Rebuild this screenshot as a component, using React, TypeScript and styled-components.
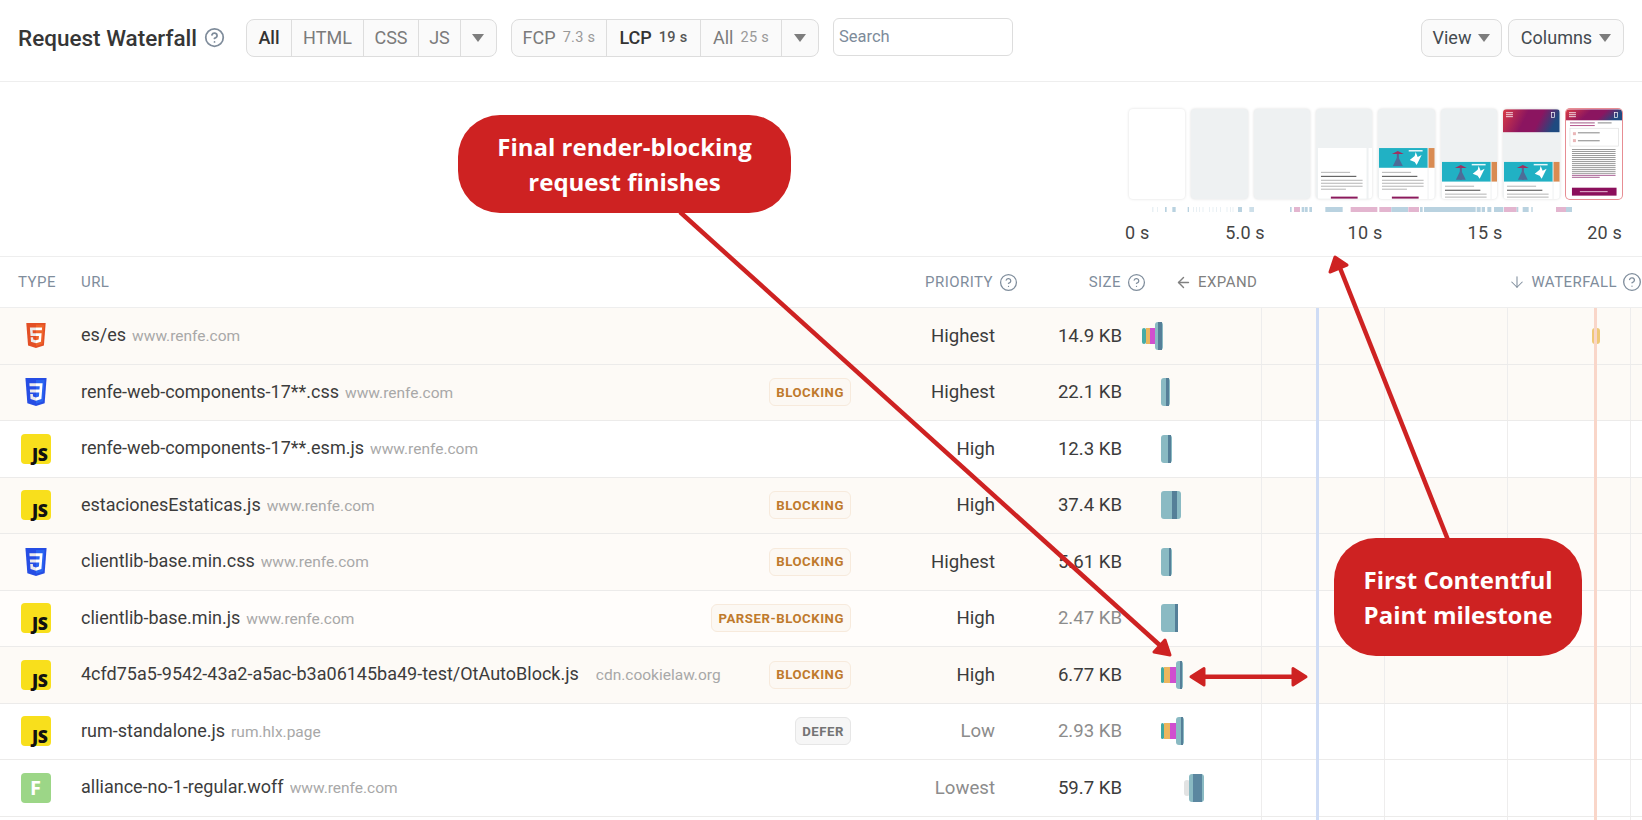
import React from "react";
import styled, { createGlobalStyle } from "styled-components";
import { ArrowDown, ArrowLeft, CircleHelp } from "lucide-react";

const Global = createGlobalStyle`
  html, body { margin: 0; padding: 0; background: #fff; overflow: hidden; }
  body { font-family: Roboto, "Liberation Sans", sans-serif; color: #3a3a3a; }
  * { box-sizing: border-box; }
`;

const Page = styled.div`
  position: relative;
  width: 1642px;
  height: 820px;
  overflow: hidden;
`;

/* Toolbar */
const Toolbar = styled.header`
  display: flex;
  align-items: center;
  height: 82px;
  padding: 0 18px 6px 18px;
  border-bottom: 1px solid #eeeeee;
`;
const Title = styled.h1`
  margin: 0;
  font-size: 22.5px;
  font-weight: 500;
  color: #363636;
  white-space: nowrap;
`;
const TitleHelp = styled.span`
  display: flex;
  margin: 0 21px 0 7px;
  color: #7f8c9b;
`;
const Group = styled.div`
  display: flex;
  height: 38px;
  margin-right: 14px;
  background: #fafafa;
  border: 1px solid #dddddd;
  border-radius: 8px;
`;
const Segment = styled.div<{ $active?: boolean; $width: number }>`
  display: flex;
  align-items: center;
  justify-content: center;
  gap: 7px;
  width: ${(p) => p.$width}px;
  font-size: 18px;
  font-weight: ${(p) => (p.$active ? 500 : 400)};
  color: ${(p) => (p.$active ? "#333333" : "#7b7b7b")};
  white-space: nowrap;
  & + & { border-left: 1px solid #dddddd; }
`;
const SegmentTime = styled.span<{ $active?: boolean }>`
  font-size: 14.5px;
  letter-spacing: 0.3px;
  font-weight: ${(p) => (p.$active ? 500 : 400)};
  color: ${(p) => (p.$active ? "#555555" : "#999999")};
`;
const Caret = styled.span`
  display: block;
  width: 0;
  height: 0;
  border-left: 6px solid transparent;
  border-right: 6px solid transparent;
  border-top: 8px solid #7d7d7d;
`;
const SearchBox = styled.input`
  width: 180px;
  height: 38px;
  padding: 0 5px;
  margin-bottom: 2px;
  font-family: Roboto, sans-serif;
  font-size: 16.5px;
  color: #333333;
  background: #fff;
  border: 1px solid #dddddd;
  border-radius: 6px;
  outline: none;
  &::placeholder { color: #7d8b9a; opacity: 1; }
`;
const Spacer = styled.div`
  flex: 1;
`;
const MenuButton = styled.div<{ $width: number }>`
  display: flex;
  align-items: center;
  justify-content: center;
  gap: 7px;
  width: ${(p) => p.$width}px;
  height: 38px;
  margin-left: 6px;
  font-size: 18px;
  color: #444a50;
  background: #fafafa;
  border: 1px solid #dddddd;
  border-radius: 8px;
`;

/* Filmstrip */
const Film = styled.section`
  display: flex;
  flex-direction: column;
  align-items: flex-end;
  height: 175px;
  padding: 27px 20px 0 0;
  border-bottom: 1px solid #eeeeee;
`;
const Frames = styled.div`
  display: flex;
  gap: 5.9px;
`;
const Frame = styled.div<{ $final?: boolean; $bg: string }>`
  width: 56.5px;
  height: 90px;
  overflow: hidden;
  border-radius: 4px;
  background: ${(p) => p.$bg};
  box-shadow: ${(p) =>
    p.$final ? "0 0 0 1px #e78d93" : "0 0 3px rgba(0, 0, 0, 0.14)"};
  svg { display: block; }
`;
const Ticks = styled.svg`
  display: block;
  margin: 8px -20px 0 0;
`;
const Axis = styled.div`
  display: flex;
  margin-top: 9px;
`;
const AxisLabel = styled.span<{ $width: number; $align: string }>`
  width: ${(p) => p.$width}px;
  font-size: 18px;
  line-height: 24px;
  letter-spacing: 0.2px;
  color: #444444;
  text-align: ${(p) => p.$align};
`;

/* Table */
const HeadRow = styled.div`
  display: flex;
  align-items: center;
  height: 51px;
  font-size: 15px;
  letter-spacing: 0.45px;
  color: #7f8d9c;
  border-bottom: 1px solid #eeeeee;
`;
const HeadType = styled.div`
  width: 81px;
  padding-left: 18px;
`;
const HeadUrl = styled.div`
  flex: 1;
`;
const HeadHelp = styled.div<{ $width: number }>`
  display: flex;
  align-items: center;
  justify-content: flex-end;
  gap: 6px;
  width: ${(p) => p.$width}px;
`;
const HeadExpand = styled.div`
  display: flex;
  align-items: center;
  gap: 6px;
  width: 339px;
  padding-left: 29px;
  color: #808080;
`;
const HeadWaterfall = styled.div`
  display: flex;
  align-items: center;
  justify-content: flex-end;
  gap: 5px;
  width: 157px;
`;

const Rows = styled.div`
  position: relative;
`;
const Milestone = styled.div<{ $left: number; $color: string }>`
  position: absolute;
  top: 0;
  bottom: 0;
  left: ${(p) => p.$left}px;
  width: 3px;
  background: ${(p) => p.$color};
`;
const Row = styled.div<{ $bg: string }>`
  display: flex;
  align-items: center;
  height: 56.5px;
  background: ${(p) => p.$bg};
  border-bottom: 1px solid #ecebea;
`;
const TypeCell = styled.div`
  display: flex;
  justify-content: center;
  width: 81px;
  padding-right: 14px;
  padding-left: 4px;
`;
const UrlCell = styled.div`
  display: flex;
  align-items: baseline;
  gap: 6px;
  flex: 1;
  min-width: 0;
  height: 100%;
  align-content: center;
  flex-wrap: nowrap;
  padding-top: 15px;
  padding-right: 10px;
`;
const UrlName = styled.span<{ $max?: number }>`
  font-size: 18px;
  line-height: 24px;
  color: #3c3c3c;
  white-space: nowrap;
  overflow: hidden;
  text-overflow: ellipsis;
  max-width: ${(p) => (p.$max ? `${p.$max}px` : "none")};
`;
const UrlHost = styled.span<{ $max?: number; $gap?: number }>`
  font-size: 15.5px;
  color: #a8a8a8;
  white-space: nowrap;
  overflow: hidden;
  text-overflow: ellipsis;
  margin-left: ${(p) => p.$gap ?? 0}px;
  max-width: ${(p) => (p.$max ? `${p.$max}px` : "none")};
`;
const Badge = styled.span<{ $tone: string }>`
  display: flex;
  align-items: center;
  height: 28px;
  padding: 0 6px;
  font-size: 13.2px;
  font-weight: 700;
  letter-spacing: 0.55px;
  border-radius: 6px;
  color: ${(p) => (p.$tone === "grey" ? "#747474" : "#bf7a2c")};
  background: ${(p) => (p.$tone === "grey" ? "#f6f6f6" : "#fcf8f3")};
  border: 1px solid ${(p) => (p.$tone === "grey" ? "#e6e6e6" : "#f7eadc")};
`;
const Priority = styled.div<{ $dim?: boolean }>`
  width: 144px;
  font-size: 18.6px;
  text-align: right;
  color: ${(p) => (p.$dim ? "#8c8c8c" : "#3c3c3c")};
`;
const Size = styled.div<{ $dim?: boolean }>`
  width: 127px;
  font-size: 18.6px;
  text-align: right;
  color: ${(p) => (p.$dim ? "#8c8c8c" : "#3c3c3c")};
`;
const WaterfallCell = styled.div`
  position: relative;
  flex: none;
  width: 520px;
  height: 100%;
  &::before {
    content: "";
    position: absolute;
    top: 0;
    bottom: 0;
    left: 139px;
    right: 0;
    background-image: linear-gradient(to right, #eeeded 1px, transparent 1px);
    background-size: 123px 100%;
  }
`;
const Bar = styled.div<{ $short?: boolean; $round?: boolean }>`
  position: absolute;
  top: 50%;
  height: ${(p) => (p.$short ? 16 : 28)}px;
  margin-top: ${(p) => (p.$short ? -8 : -14)}px;
  border-radius: ${(p) => (p.$round ? "3px" : "0")};
`;
const IconBox = styled.div<{ $bg: string }>`
  display: flex;
  align-items: flex-end;
  justify-content: flex-end;
  width: 30px;
  height: 30px;
  border-radius: 4px;
  background: ${(p) => p.$bg};
`;
const JsMark = styled.span`
  padding: 0 3px 1px 0;
  font-family: "Open Sans", sans-serif;
  font-size: 17.5px;
  font-weight: 800;
  line-height: 18px;
  letter-spacing: -0.4px;
  color: #111;
`;
const FontMark = styled.span`
  margin: auto;
  font-family: "Open Sans", sans-serif;
  font-size: 20px;
  font-weight: 700;
  color: #fff;
`;

/* Annotations */
const Overlay = styled.svg`
  position: absolute;
  top: 0;
  left: 0;
  pointer-events: none;
`;
const Callout = styled.div<{ $x: number; $y: number; $w: number; $h: number }>`
  position: absolute;
  left: ${(p) => p.$x}px;
  top: ${(p) => p.$y}px;
  width: ${(p) => p.$w}px;
  height: ${(p) => p.$h}px;
  display: flex;
  align-items: center;
  justify-content: center;
  text-align: center;
  font-family: "Open Sans", sans-serif;
  font-size: 24px;
  font-weight: 700;
  line-height: 35.5px;
  color: #fff;
  background: #ce2222;
  border-radius: 42px;
`;

const Html5 = () => (
  <svg width="22" height="25" viewBox="0 0 512 512" preserveAspectRatio="none">
    <path fill="#E34F26" d="M71 460 30 0h451l-41 460-185 52z" />
    <path fill="#EF652A" d="M256 472l149-41 35-394H256z" />
    <path fill="#EBEBEB" d="M256 208h-75l-5-58h80V94H114l1 15 14 156h127zM256 355h-1l-63-17-4-45h-56l7 89 116 32h1z" />
    <path fill="#FFF" d="M255 208v57h70l-7 73-63 17v59l116-32 1-10 13-149 2-15H255zM255 94v56h137l1-12 3-29 1-15z" />
  </svg>
);
const Css3 = () => (
  <svg width="24" height="28" viewBox="0 0 512 512" preserveAspectRatio="none">
    <path fill="#264DE4" d="M71.357 460.819 30.272 0h451.456l-41.129 460.746L255.724 512z" />
    <path fill="#2965F1" d="M405.388 431.408l35.148-393.73H256v435.146z" />
    <path fill="#EBEBEB" d="M124.46 208.59l5.065 56.517H256V208.59zM119.419 150.715H256V94.197H114.281zM256 355.372l-.248.066-62.944-16.996-4.023-45.076h-56.736l7.919 88.741 115.772 32.14.26-.073z" />
    <path fill="#FFF" d="M255.805 208.59v56.517h69.573l-6.559 73.278-63.014 17.008v58.8l115.82-32.1.85-9.545 13.276-148.732 1.379-15.226 10.199-114.393H255.805v56.518h79.695l-5.146 58.875z" />
  </svg>
);

type Kind = "html" | "css" | "js" | "font";
const TypeIcon = ({ kind }: { kind: Kind }) => {
  if (kind === "html") return <Html5 />;
  if (kind === "css") return <Css3 />;
  if (kind === "js")
    return (
      <IconBox $bg="#f8df1c">
        <JsMark>JS</JsMark>
      </IconBox>
    );
  return (
    <IconBox $bg="#9cd687">
      <FontMark>F</FontMark>
    </IconBox>
  );
};

const TEAL = "#8abac3";
const DARK = "#557f98";
const STEEL = "#5b87a0";

type Piece = { x: number; w: number; c: string; short?: boolean; round?: boolean };

const stripes = (x: number, big: number): Piece[] => [
  { x, w: 3, c: "#3fa8a4", short: true, round: true },
  { x: x + 3, w: 6, c: "#ebb65e", short: true },
  { x: x + 9, w: 6.4, c: "#d04fcf", short: true },
  { x: x + 15.4, w: big, c: TEAL, round: true },
];

const rows: {
  kind: Kind;
  name: string;
  max?: number;
  host: string;
  hostMax?: number;
  hostGap?: number;
  badge?: string;
  tone?: string;
  priority: string;
  pDim?: boolean;
  size: string;
  sDim?: boolean;
  bg: string;
  bars: Piece[];
}[] = [
  {
    kind: "html", name: "es/es", host: "www.renfe.com", priority: "Highest", size: "14.9 KB", bg: "#fdfaf6",
    bars: [
      { x: 1142, w: 3.7, c: "#46aba6", short: true, round: true },
      { x: 1145.7, w: 4.3, c: "#ebb65e", short: true },
      { x: 1150, w: 5, c: "#d04fcf", short: true },
      { x: 1155, w: 7.7, c: TEAL, round: true },
      { x: 1158, w: 3.6, c: DARK },
      { x: 1592, w: 8, c: "#efc877", short: true, round: true },
    ],
  },
  {
    kind: "css", name: "renfe-web-components-17**.css", host: "www.renfe.com", badge: "BLOCKING", tone: "amber", priority: "Highest", size: "22.1 KB", bg: "#fdfaf6",
    bars: [{ x: 1161, w: 9.3, c: TEAL, round: true }, { x: 1166, w: 3.2, c: DARK }],
  },
  {
    kind: "js", name: "renfe-web-components-17**.esm.js", host: "www.renfe.com", priority: "High", size: "12.3 KB", bg: "#ffffff",
    bars: [{ x: 1161, w: 11, c: TEAL, round: true }, { x: 1168.4, w: 3, c: DARK }],
  },
  {
    kind: "js", name: "estacionesEstaticas.js", host: "www.renfe.com", badge: "BLOCKING", tone: "amber", priority: "High", size: "37.4 KB", bg: "#fdfaf6",
    bars: [{ x: 1160.5, w: 20, c: TEAL, round: true }, { x: 1172, w: 5, c: DARK }],
  },
  {
    kind: "css", name: "clientlib-base.min.css", host: "www.renfe.com", badge: "BLOCKING", tone: "amber", priority: "Highest", size: "5.61 KB", bg: "#fefbf8",
    bars: [{ x: 1161, w: 11, c: TEAL, round: true }, { x: 1169, w: 1.5, c: DARK }],
  },
  {
    kind: "js", name: "clientlib-base.min.js", host: "www.renfe.com", badge: "PARSER-BLOCKING", tone: "amber", priority: "High", size: "2.47 KB", sDim: true, bg: "#fffdfb",
    bars: [{ x: 1161, w: 17, c: TEAL, round: true }, { x: 1175, w: 3, c: DARK }],
  },
  {
    kind: "js", name: "4cfd75a5-9542-43a2-a5ac-b3a06145ba49-test/OtAutoBlock.js", max: 523, host: "cdn.cookielaw.org", hostMax: 132, hostGap: 11, badge: "BLOCKING", tone: "amber", priority: "High", size: "6.77 KB", bg: "#fdfaf6",
    bars: [...stripes(1161, 6.3), { x: 1180, w: 1.8, c: DARK }],
  },
  {
    kind: "js", name: "rum-standalone.js", host: "rum.hlx.page", badge: "DEFER", tone: "grey", priority: "Low", pDim: true, size: "2.93 KB", sDim: true, bg: "#ffffff",
    bars: [...stripes(1161, 7.3), { x: 1181, w: 2.2, c: DARK }],
  },
  {
    kind: "font", name: "alliance-no-1-regular.woff", host: "www.renfe.com", priority: "Lowest", pDim: true, size: "59.7 KB", bg: "#ffffff",
    bars: [
      { x: 1184, w: 6, c: "#e2e3e3", short: true, round: true },
      { x: 1188.7, w: 15, c: TEAL, round: true },
      { x: 1193.4, w: 8.2, c: STEEL },
    ],
  },
  { kind: "font", name: "", host: "", priority: "", size: "", bg: "#ffffff", bars: [] },
];

const frameBgs = ["#ffffff", "#eef1f2", "#eef1f2", "#eef1f2", "#eef1f2", "#eef1f2", "#eef1f2", "#ffffff"];

const TextLines = ({ x, y, w }: { x: number; y: number; w: number }) => (
  <g fill="#b4b4b4">
    <rect x={x} y={y} width={w * 0.7} height="1" />
    <rect x={x} y={y + 4} width={w * 0.85} height="1.2" fill="#666" />
    {[0, 1, 2, 3].map((i) => (
      <rect key={i} x={x} y={y + 8 + i * 3} width={i === 3 ? w * 0.6 : w} height="1" />
    ))}
  </g>
);

const Banner = ({ y }: { y: number }) => (
  <g>
    <rect x="1" y={y} width="49" height="20" fill="#21b1c4" />
    <path d={`M14 ${y + 6} l6 -3 6 3 z`} fill="#a0305f" />
    <rect x="19" y={y + 6} width="2" height="12" fill="#5d5f8e" />
    <path d={`M15 ${y + 18} l5 -10 5 10 z`} fill="#4d6c98" />
    <path d={`M32 ${y + 12} l5 -4 1 -4 2 5 4 -2 -3 6 -2 4 -2 -3 z`} fill="#fff" />
    <rect x="31" y={y + 2} width="14" height="1.5" fill="#e8f7fa" />
    <rect x="51" y={y} width="6" height="20" fill="#d98b52" />
    <rect x="1" y={y + 20} width="49" height="40" fill="#fff" />
    <rect x="51" y={y + 20} width="6" height="40" fill="#fff" />
    <TextLines x={4} y={y + 24} w={42} />
  </g>
);

const Gradient = ({ h }: { h: number }) => (
  <g>
    <rect width="57" height={h} fill="url(#hdr)" />
    <rect x="3" y="3" width="7" height="0.8" fill="#fff" />
    <rect x="3" y="5" width="7" height="0.8" fill="#fff" />
    <rect x="3" y="7" width="7" height="0.8" fill="#fff" />
    <rect x="49" y="3" width="3" height="5" fill="none" stroke="#fff" strokeWidth="0.7" />
  </g>
);

const Thumb = ({ n }: { n: number }) => (
  <svg width="56.5" height="90" viewBox="0 0 57 90">
    <defs>
      <linearGradient id="hdr" x1="0" x2="1" y1="0" y2="0.2">
        <stop offset="0" stopColor="#d93b45" />
        <stop offset="0.45" stopColor="#8b1560" />
        <stop offset="0.7" stopColor="#8b1560" />
        <stop offset="1" stopColor="#1f4a80" />
      </linearGradient>
    </defs>
    {n === 3 && (
      <g>
        <rect x="2" y="39" width="49" height="51" fill="#fff" />
        <rect x="53" y="39" width="4" height="51" fill="#fff" />
        <TextLines x={5} y={63} w={42} />
        <rect x="15" y="88" width="27" height="2" fill="#8b1a5c" />
      </g>
    )}
    {n === 4 && (
      <g>
        <Banner y={39} />
        <rect x="14" y="88" width="27" height="2" fill="#8b1a5c" />
      </g>
    )}
    {n === 5 && <Banner y={53} />}
    {n === 6 && (
      <g>
        <Banner y={53} />
        <Gradient h={23} />
      </g>
    )}
    {n === 7 && (
      <g>
        <Gradient h={11} />
        <rect x="4" y="13" width="25" height="1.2" fill="#b0759a" />
        <rect x="32" y="13" width="14" height="1.2" fill="#999" />
        <rect x="4" y="16" width="25" height="0.8" fill="#a2296f" />
        <rect x="4" y="19" width="49" height="18" fill="#fff" stroke="#d9d9d9" strokeWidth="0.6" />
        <rect x="7" y="23" width="3" height="3" fill="#eab6b8" />
        <rect x="12" y="23" width="22" height="1.2" fill="#999" />
        <rect x="7" y="30" width="3" height="3" fill="#eab6b8" />
        <rect x="12" y="31" width="22" height="1.2" fill="#999" />
        {Array.from({ length: 15 }, (_, i) => (
          <rect key={i} x="6" y={40 + i * 2} width={i === 14 ? 28 : 44} height="1" fill={i > 12 ? "#a65c90" : "#9a9a9a"} />
        ))}
        <rect x="6" y="79" width="45" height="8" fill="#8b0f5c" />
        <rect x="14" y="82.5" width="28" height="1" fill="#e7bcd6" />
      </g>
    )}
  </svg>
);

const B = "#b9d2e0";
const P = "#e3b5cf";
const tickA: [number, number, string][] = [
  [127, 3, "#dfe9ef"], [142, 2, "#dfe9ef"], [165, 5, B], [187, 10, B], [233, 4, B], [249, 2, "#dfe9ef"],
  [258, 2, "#dfe9ef"], [268, 2, "#dfe9ef"], [278, 2, "#dfe9ef"], [297, 2, "#dfe9ef"], [308, 2, "#dfe9ef"],
  [318, 2, "#dfe9ef"], [331, 2, "#dfe9ef"], [350, 2, "#dfe9ef"], [360, 2, "#dfe9ef"], [368, 2, "#dfe9ef"],
  [384, 12, B], [418, 14, "#cddfe9"], [540, 5, B], [552, 18, P], [575, 8, B], [585, 8, B], [598, 8, B],
  [646, 52, B], [722, 80, P],
];
const tickB: [number, number, string][] = [
  [0, 20, P], [28, 36, P], [64, 50, B], [115, 32, P], [150, 8, B], [162, 155, B], [320, 12, B], [335, 10, B],
  [352, 12, B], [372, 28, B], [402, 38, P], [440, 5, B], [458, 18, B], [484, 4, B], [558, 30, P], [588, 18, B],
];

const App = () => (
  <Page>
    <Global />
    <Toolbar>
      <Title>Request Waterfall</Title>
      <TitleHelp>
        <CircleHelp size={21} strokeWidth={2} />
      </TitleHelp>
      <Group>
        <Segment $active $width={44}>All</Segment>
        <Segment $width={72}>HTML</Segment>
        <Segment $width={55}>CSS</Segment>
        <Segment $width={42}>JS</Segment>
        <Segment $width={36}><Caret /></Segment>
      </Group>
      <Group>
        <Segment $width={94}>FCP <SegmentTime>7.3 s</SegmentTime></Segment>
        <Segment $active $width={94}>LCP <SegmentTime $active>19 s</SegmentTime></Segment>
        <Segment $width={81}>All <SegmentTime>25 s</SegmentTime></Segment>
        <Segment $width={37}><Caret /></Segment>
      </Group>
      <SearchBox placeholder="Search" />
      <Spacer />
      <MenuButton $width={81}>View <Caret /></MenuButton>
      <MenuButton $width={116}>Columns <Caret /></MenuButton>
    </Toolbar>

    <Film>
      <Frames>
        {frameBgs.map((bg, i) => (
          <Frame key={i} $bg={bg} $final={i === 7}>
            <Thumb n={i} />
          </Frame>
        ))}
      </Frames>
      <Ticks width={532} height={5} viewBox="1110 0 532 5">
        {tickA.map(([x, w, c], i) => (
          <rect key={i} x={1110 + x / 3} y={0} width={w / 3} height={5} fill={c} />
        ))}
        {tickB.map(([x, w, c], i) => (
          <rect key={i} x={1370 + x / 3} y={0} width={w / 3} height={5} fill={c} />
        ))}
      </Ticks>
      <Axis>
        <AxisLabel $width={60} $align="left">0 s</AxisLabel>
        <AxisLabel $width={120} $align="center">5.0 s</AxisLabel>
        <AxisLabel $width={120} $align="center">10 s</AxisLabel>
        <AxisLabel $width={120} $align="center">15 s</AxisLabel>
        <AxisLabel $width={77} $align="right">20 s</AxisLabel>
      </Axis>
    </Film>

    <HeadRow>
      <HeadType>TYPE</HeadType>
      <HeadUrl>URL</HeadUrl>
      <HeadHelp $width={145}>PRIORITY <CircleHelp size={19} strokeWidth={1.6} /></HeadHelp>
      <HeadHelp $width={128}>SIZE <CircleHelp size={19} strokeWidth={1.6} /></HeadHelp>
      <HeadExpand><ArrowLeft size={17} strokeWidth={2} />EXPAND</HeadExpand>
      <HeadWaterfall>
        <ArrowDown size={18} strokeWidth={1.4} />
        WATERFALL <CircleHelp size={20} strokeWidth={1.6} />
      </HeadWaterfall>
    </HeadRow>

    <Rows>
      {rows.map((r, i) => (
        <Row key={i} $bg={r.bg}>
          <TypeCell>{r.name && <TypeIcon kind={r.kind} />}</TypeCell>
          <UrlCell>
            <UrlName $max={r.max}>{r.name}</UrlName>
            <UrlHost $max={r.hostMax} $gap={r.hostGap}>{r.host}</UrlHost>
            <Spacer />
          </UrlCell>
          {r.badge && <Badge $tone={r.tone ?? "amber"}>{r.badge}</Badge>}
          <Priority $dim={r.pDim}>{r.priority}</Priority>
          <Size $dim={r.sDim}>{r.size}</Size>
          <WaterfallCell>
            {r.bars.map((b, j) => (
              <Bar
                key={j}
                $short={b.short}
                $round={b.round}
                style={{ left: b.x - 1122, width: b.w, background: b.c }}
              />
            ))}
          </WaterfallCell>
        </Row>
      ))}
      <Milestone $left={1316} $color="#cfdcf5" />
      <Milestone $left={1594} $color="#f9d6c9" />
    </Rows>

    <Overlay width={1642} height={820} viewBox="0 0 1642 820">
      <g fill="#ce2222" stroke="#ce2222" strokeLinejoin="round">
        <line x1="680" y1="212" x2="1164" y2="649" strokeWidth="4.5" />
        <polygon points="1170,655 1154,652 1165,640" strokeWidth="3" />
        <line x1="1448" y1="540" x2="1340" y2="268" strokeWidth="4.5" />
        <polygon points="1335,257 1330,272 1347,265" strokeWidth="3" />
        <line x1="1200" y1="676.7" x2="1298" y2="676.7" strokeWidth="4.5" />
        <polygon points="1191,676.7 1204,668.5 1204,685" strokeWidth="3" />
        <polygon points="1306,676.7 1293,668.5 1293,685" strokeWidth="3" />
      </g>
    </Overlay>
    <Callout $x={458} $y={115} $w={333} $h={98}>
      Final render-blocking<br />request finishes
    </Callout>
    <Callout $x={1334} $y={538} $w={248} $h={118}>
      First Contentful<br />Paint milestone
    </Callout>
  </Page>
);

export default App;
